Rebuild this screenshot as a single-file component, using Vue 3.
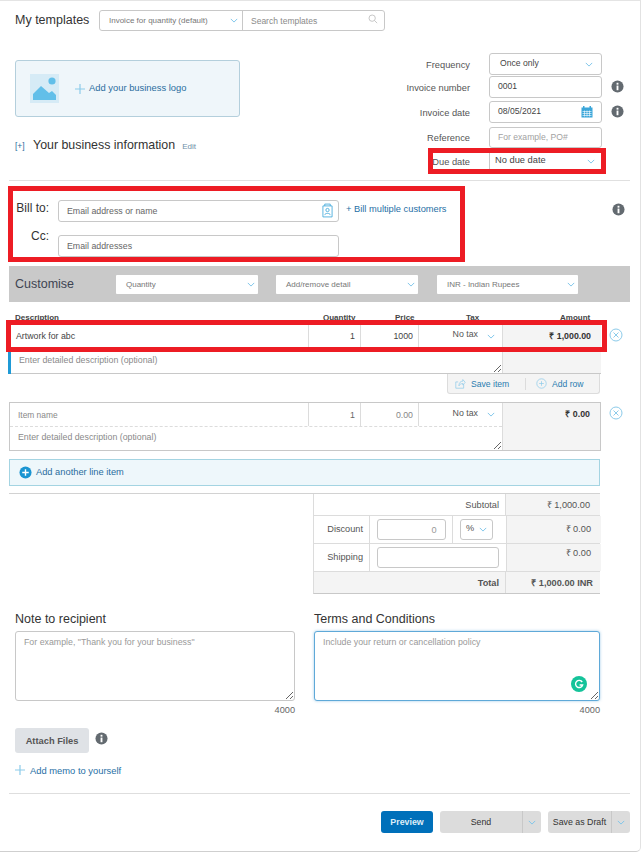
<script setup>
const fields = [
  { label: 'Invoice number', value: '0001' },
]
const customise = ['Quantity', 'Add/remove detail', 'INR - Indian Rupees']
</script>

<template>
  <div class="page">
    <div class="templates">
      <span class="tpl-title">My templates</span>
      <div class="tpl-group">
        <div class="tpl-select">
          <span>Invoice for quantity (default)</span>
          <svg class="chev" viewBox="0 0 10 6"><path d="M1 1l4 4 4-4" /></svg>
        </div>
        <div class="tpl-search">
          <span>Search templates</span>
          <svg class="search" viewBox="0 0 12 12"><circle cx="5" cy="5" r="3.8" /><path d="M8 8l3 3" /></svg>
        </div>
      </div>
    </div>

    <div class="top">
      <div class="top-left">
        <div class="logo-box">
          <svg class="logo-img" viewBox="0 0 29 29">
            <rect width="29" height="29" fill="#d6ebf6" />
            <circle cx="22" cy="7" r="3.6" fill="#62bfe9" />
            <path d="M3 26v-6l8-8 8 7 3-2 4 4v5z" fill="#62bfe9" />
          </svg>
          <svg class="plus" viewBox="0 0 10 10"><path d="M5 0v10M0 5h10" /></svg>
          <span class="logo-text">Add your business logo</span>
        </div>
        <div class="biz">
          <span class="biz-toggle">[+]</span>
          <span class="biz-title">Your business information</span>
          <span class="biz-edit">Edit</span>
        </div>
      </div>

      <div class="top-right">
        <div class="meta-row r-freq">
          <label>Frequency</label>
          <div class="field select-field"><span class="up">Once only</span>
            <svg class="chev" viewBox="0 0 10 6"><path d="M1 1l4 4 4-4" /></svg></div>
        </div>
        <div v-for="f in fields" :key="f.label" class="meta-row r-num">
          <label>{{ f.label }}</label>
          <div class="field"><span class="up">{{ f.value }}</span></div>
          <svg class="info meta-info" viewBox="0 0 14 14"><circle cx="7" cy="7" r="6.5" /><rect x="6" y="6" width="2" height="5" /><rect x="6" y="3" width="2" height="2" /></svg>
        </div>
        <div class="meta-row r-date">
          <label>Invoice date</label>
          <div class="field"><span class="up">08/05/2021</span>
            <svg class="cal" viewBox="0 0 12 12">
              <rect x="0.5" y="1.5" width="11" height="10" fill="#3ba6d9" />
              <rect x="2" y="0" width="1.5" height="3" fill="#3ba6d9" /><rect x="8.5" y="0" width="1.5" height="3" fill="#3ba6d9" />
              <path d="M1.5 5.5h9M1.5 7.5h9M1.5 9.5h9M3.5 4.5v6M6 4.5v6M8.5 4.5v6" stroke="#fff" stroke-width="0.6" />
            </svg></div>
          <svg class="info meta-info" viewBox="0 0 14 14"><circle cx="7" cy="7" r="6.5" /><rect x="6" y="6" width="2" height="5" /><rect x="6" y="3" width="2" height="2" /></svg>
        </div>
        <div class="meta-row r-ref">
          <label>Reference</label>
          <div class="field"><span class="ph">For example, PO#</span></div>
        </div>
        <div class="meta-row r-due">
          <label>Due date</label>
          <div class="field select-field due"><span class="up">No due date</span>
            <svg class="chev" viewBox="0 0 10 6"><path d="M1 1l4 4 4-4" /></svg></div>
        </div>
      </div>
    </div>

    <div class="bill">
      <div class="bill-labels">
        <span>Bill to:</span>
        <span>Cc:</span>
      </div>
      <div class="bill-inputs">
        <div class="field bill-input"><span class="grey">Email address or name</span>
          <svg class="contact" viewBox="0 0 12 16">
            <path d="M1 3h10v12H1z M3 3V1h6v2" fill="none" stroke="#3ba6d9" stroke-width="0.9" />
            <circle cx="6" cy="7.5" r="1.8" fill="none" stroke="#3ba6d9" stroke-width="0.9" />
            <path d="M3 13c0-2.5 6-2.5 6 0" fill="none" stroke="#3ba6d9" stroke-width="0.9" />
          </svg></div>
        <div class="field bill-input"><span class="grey">Email addresses</span></div>
      </div>
      <span class="bill-link">+ Bill multiple customers</span>
      <svg class="info bill-info" viewBox="0 0 14 14"><circle cx="7" cy="7" r="6.5" /><rect x="6" y="6" width="2" height="5" /><rect x="6" y="3" width="2" height="2" /></svg>
    </div>

    <div class="band">
      <span class="band-title">Customise</span>
      <div class="band-selects">
        <div v-for="c in customise" :key="c" class="band-select">
          <span>{{ c }}</span>
          <svg class="chev" viewBox="0 0 10 6"><path d="M1 1l4 4 4-4" /></svg>
        </div>
      </div>
    </div>

    <div class="thead">
      <span class="th-desc">Description</span>
      <span class="th-qty">Quantity</span>
      <span class="th-price">Price</span>
      <span class="th-tax">Tax</span>
      <span class="th-amt">Amount</span>
    </div>

    <div class="line-row first">
      <div class="line line-active">
        <div class="c c-name dark">Artwork for abc</div>
        <div class="c c-num dark">1</div>
        <div class="c c-num dark">1000</div>
        <div class="c c-tax"><span>No tax</span><svg class="chev" viewBox="0 0 10 6"><path d="M1 1l4 4 4-4" /></svg></div>
        <div class="c-amount strong">₹ 1,000.00</div>
        <textarea class="c-desc" placeholder="Enter detailed description (optional)"></textarea>
      </div>
      <svg class="remove" viewBox="0 0 14 14"><circle cx="7" cy="7" r="6" /><path d="M4.5 4.5l5 5M9.5 4.5l-5 5" /></svg>
    </div>

    <div class="item-actions">
      <span class="action act-save">
        <svg viewBox="0 0 14 14"><path d="M1 5h3M1 5v8h10V8" /><path d="M5 10c0-4 2-6 5-6V2l3 3.5L10 9V7c-2 0-4 1-5 3z" /></svg>
        Save item
      </span>
      <span class="action act-add">
        <svg viewBox="0 0 14 14"><circle cx="7" cy="7" r="6" /><path d="M7 4v6M4 7h6" /></svg>
        Add row
      </span>
    </div>

    <div class="line-row second">
      <div class="line line-empty">
        <div class="c c-name ph-sm">Item name</div>
        <div class="c c-num grey-num">1</div>
        <div class="c c-num light-num">0.00</div>
        <div class="c c-tax"><span>No tax</span><svg class="chev" viewBox="0 0 10 6"><path d="M1 1l4 4 4-4" /></svg></div>
        <div class="c-amount strong">₹ 0.00</div>
        <textarea class="c-desc" placeholder="Enter detailed description (optional)"></textarea>
      </div>
      <svg class="remove" viewBox="0 0 14 14"><circle cx="7" cy="7" r="6" /><path d="M4.5 4.5l5 5M9.5 4.5l-5 5" /></svg>
    </div>

    <div class="add-line">
      <svg viewBox="0 0 14 14"><circle cx="7" cy="7" r="6.5" fill="#1b95d2" /><path d="M7 3.5v7M3.5 7h7" stroke="#fff" stroke-width="1.5" /></svg>
      <span>Add another line item</span>
    </div>

    <div class="totals-wrap">
      <div class="totals">
        <div class="t-row t-sub">
          <div class="t-wide">Subtotal</div>
          <div class="t-val">₹ 1,000.00</div>
        </div>
        <div class="t-row t-disc">
          <div class="t-label">Discount</div>
          <div class="t-input"><div class="field small-in"><span>0</span></div></div>
          <div class="t-unit"><div class="field unit-in"><span>%</span><svg class="chev" viewBox="0 0 10 6"><path d="M1 1l4 4 4-4" /></svg></div></div>
          <div class="t-val">₹ 0.00</div>
        </div>
        <div class="t-row t-ship">
          <div class="t-label">Shipping</div>
          <div class="t-ship-in"><div class="field ship-in"></div></div>
          <div class="t-val up-val">₹ 0.00</div>
        </div>
        <div class="t-row t-total">
          <div class="t-wide bold">Total</div>
          <div class="t-val bold">₹ 1,000.00 INR</div>
        </div>
      </div>
    </div>

    <div class="notes">
      <div class="note note-left">
        <h3>Note to recipient</h3>
        <textarea placeholder="For example, &quot;Thank you for your business&quot;"></textarea>
        <div class="count">4000</div>
      </div>
      <div class="note note-right">
        <h3>Terms and Conditions</h3>
        <div class="terms-box">
          <textarea class="focus" placeholder="Include your return or cancellation policy"></textarea>
          <svg class="grammarly" viewBox="0 0 16 16"><circle cx="8" cy="8" r="8" fill="#15c39a" /><path d="M11.2 6A3.6 3.6 0 1 0 11.6 9H8.6" fill="none" stroke="#fff" stroke-width="1.4" /></svg>
        </div>
        <div class="count">4000</div>
      </div>
    </div>

    <div class="attach-row">
      <span class="attach">Attach Files</span>
      <svg class="info" viewBox="0 0 14 14"><circle cx="7" cy="7" r="6.5" /><rect x="6" y="6" width="2" height="5" /><rect x="6" y="3" width="2" height="2" /></svg>
    </div>

    <div class="memo">
      <svg class="plus" viewBox="0 0 10 10"><path d="M5 0v10M0 5h10" /></svg>
      <span>Add memo to yourself</span>
    </div>

    <div class="footer">
      <span class="btn preview">Preview</span>
      <div class="btn split send"><span class="main">Send</span><span class="caret"><svg class="chev" viewBox="0 0 10 6"><path d="M1 1l4 4 4-4" /></svg></span></div>
      <div class="btn split draft"><span class="main">Save as Draft</span><span class="caret"><svg class="chev" viewBox="0 0 10 6"><path d="M1 1l4 4 4-4" /></svg></span></div>
    </div>

    <div class="mark m-due"></div>
    <div class="mark m-bill"></div>
    <div class="mark m-line"></div>
  </div>
</template>

<style>
html, body { margin: 0; background: #fff; }
</style>

<style scoped>
* { box-sizing: border-box; }
.page {
  position: relative;
  width: 641px;
  height: 852px;
  background: #fff;
  border-top: 1px solid #e4e4e4;
  border-right: 1px solid #e2e2e2;
  border-bottom: 1px solid #cfcfcf;
  border-bottom-right-radius: 5px;
  font-family: "Liberation Sans", Arial, sans-serif;
  color: #333;
  overflow: hidden;
  padding-top: 9px;
}
.chev { width: 8px; height: 5px; flex: none; fill: none; stroke: #7cc4ea; stroke-width: 1.2; }
.info { width: 13px; height: 13px; flex: none; fill: #636a70; }
.info rect { fill: #fff; }
.plus { width: 10px; height: 10px; flex: none; fill: none; stroke: #8ccbea; stroke-width: 1.2; }
.field {
  display: flex;
  align-items: center;
  justify-content: space-between;
  background: #fff;
  border: 1px solid #c8c8c8;
  border-radius: 3px;
}

/* templates */
.templates { display: flex; align-items: center; height: 21px; padding-left: 15px; }
.tpl-title { width: 84px; margin-top: -2px; font-size: 12.5px; color: #333; }
.tpl-group { display: flex; width: 286px; height: 21px; border: 1px solid #c8c8c8; border-radius: 3px; }
.tpl-select { width: 143px; display: flex; align-items: center; justify-content: space-between; padding: 0 4px 0 9px; border-right: 1px solid #c8c8c8; font-size: 8px; color: #777; }
.tpl-search { flex: 1; display: flex; align-items: center; justify-content: space-between; padding: 0 6px 0 8px; font-size: 8.5px; color: #8a8a8a; }
.search { width: 10px; height: 10px; fill: none; stroke: #b5b5b5; stroke-width: 0.9; margin-top: -3px; }

/* top */
.top { display: flex; height: 127px; margin-top: 22px; padding-left: 15px; }
.top-left { width: 355px; padding-top: 7px; }
.logo-box {
  display: flex;
  align-items: center;
  width: 225px;
  height: 57px;
  padding-left: 14px;
  background: #eff6fa;
  border: 1px solid #b4cfdc;
  border-radius: 3px;
}
.logo-img { width: 29px; height: 29px; margin-right: 16px; }
.logo-text { margin: -2px 0 0 4px; font-size: 9.4px; color: #2a6d9e; }
.biz { display: flex; align-items: baseline; margin-top: 21px; }
.biz-toggle { width: 18px; font-size: 8.5px; color: #2a6d9e; }
.biz-title { font-size: 12.4px; color: #333; }
.biz-edit { margin-left: 7px; font-size: 8px; color: #6d8fa8; }
.top-right { flex: 1; }
.meta-row { display: flex; align-items: center; position: relative; }
.meta-row label { width: 100px; margin: 1px 19px 0 0; text-align: right; font-size: 9.3px; color: #555; }
.meta-row .field { width: 113px; padding: 0 8px; font-size: 8.6px; color: #444; }
.up { margin-top: -3px; }
.meta-info { position: absolute; left: 241px; top: 4px; }
.r-freq { height: 22px; }
.r-freq .up { margin-left: 2px; }
.r-freq .field { height: 22px; }
.r-num { height: 22px; margin-top: 1px; }
.r-num .field { height: 22px; }
.r-date { height: 22px; margin-top: 3px; }
.r-date .field { height: 22px; }
.r-ref { height: 22px; margin-top: 3px; }
.r-ref .field { height: 21px; }
.r-due { height: 22px; margin-top: 2px; }
.meta-row .due { height: 22px; padding: 0 6px 0 5px; font-size: 9.3px; }
.ph { color: #a2a2a2; }
.cal { width: 12px; height: 12px; }

/* bill */
.bill {
  position: relative;
  display: flex;
  height: 86px;
  margin: 0 10px 0 9px;
  padding-top: 19px;
  border-top: 1px solid #e0e0e0;
}
.bill-labels { display: flex; flex-direction: column; align-items: flex-end; width: 40px; font-size: 12px; color: #333; padding-top: 1px; white-space: nowrap; }
.bill-labels span:last-child { margin-top: 14px; }
.bill-inputs { margin-left: 9px; width: 281px; }
.bill-input { height: 22px; padding: 0 5px 0 8px; font-size: 8.8px; }
.bill-input + .bill-input { margin-top: 13px; }
.grey { color: #666; }
.contact { width: 11px; height: 17px; margin-top: -1px; }
.bill-link { margin-left: 7px; margin-top: 4px; font-size: 9.3px; color: #1f6fa5; }
.bill-info { position: absolute; left: 603px; top: 22px; }

/* band */
.band { display: flex; align-items: center; height: 36px; margin: 0 10px 0 9px; padding-left: 6px; background: #c9c9c9; }
.band-title { width: 101px; font-size: 12.5px; color: #3e4452; }
.band-selects { display: flex; gap: 18px; }
.band-select { display: flex; align-items: center; justify-content: space-between; width: 142px; height: 19px; padding: 0 3px 0 10px; background: #fff; border-radius: 1px; font-size: 8px; color: #777; }
.band-select:last-child { width: 141px; margin-left: 1px; }

/* table */
.thead { position: relative; height: 20px; margin-left: 15px; font-size: 8px; font-weight: 700; color: #444; }
.thead span { position: absolute; top: 11px; }
.th-desc { left: 0; }
.th-qty { left: 308px; }
.th-price { left: 380px; }
.th-tax { left: 451px; }
.th-amt { left: 545px; }
.line-row { display: flex; margin-left: 9px; }
.line {
  display: grid;
  width: 592px;
  grid-template-columns: 300px 52px 58px 83px 99px;
  grid-template-rows: 26px 1fr;
  border-right: 1px solid #c8c8c8;
  border-bottom: 1px solid #c8c8c8;
  position: relative;
}
.line-active { height: 52px; border-top: 1px solid #c8c8c8; }
.line-empty { height: 49px; margin-top: 0; border: 1px solid #c8c8c8; grid-template-columns: 299px 52px 58px 83px 98px; grid-template-rows: 23px 1fr; }
.line-active::before { content: ""; position: absolute; left: -1px; top: 26px; bottom: -1px; width: 3px; background: #1f9ad6; }
.c { display: flex; align-items: center; border-right: 1px solid #dcdcdc; font-size: 8.8px; }
.c-name { padding-left: 7px; }
.c-num { justify-content: flex-end; padding-right: 5px; }
.dark { color: #444; }
.ph-sm { color: #888; font-size: 8.4px; padding-left: 8px; }
.grey-num { color: #666; }
.light-num { color: #888; }
.c-tax { justify-content: flex-end; gap: 9px; padding-right: 7px; border-right: none; color: #555; padding-bottom: 4px; }
.c-tax .chev { margin-top: 4px; }
.c-amount { grid-column: 5; grid-row: 1 / span 2; padding: 7px 10px 0 0; text-align: right; font-size: 8.8px; background: #f4f4f4; border-left: 1px solid #dcdcdc; }
.line-empty .c-amount { padding-top: 5px; }
.strong { font-weight: 700; color: #333; }
.c-desc {
  grid-column: 1 / span 4;
  grid-row: 2;
  display: block;
  width: 100%;
  height: 100%;
  padding: 6px 10px;
  border: none;
  outline: none;
  resize: both;
  font: 8.8px "Liberation Sans", Arial, sans-serif;
  background: transparent;
}
.line-empty .c-desc { border-top: 1px dashed #dcdcdc; padding: 5px 8px; }
.c-desc::placeholder { color: #8a8a8a; opacity: 1; }
.remove { width: 14px; height: 14px; margin: 6px 0 0 8px; fill: none; stroke: #8ccbea; stroke-width: 1; }
.item-actions {
  display: flex;
  align-items: center;
  width: 153px;
  height: 20px;
  margin-left: 447px;
  background: #f4f4f4;
  border: 1px solid #dcdcdc;
  border-top: none;
  border-radius: 0 0 3px 3px;
  font-size: 8.6px;
  color: #2a7cb0;
}
.action { display: flex; align-items: center; gap: 5px; height: 12px; }
.action svg { width: 11px; height: 11px; fill: none; stroke: #8ccbea; stroke-width: 0.9; }
.act-save { width: 78px; padding-left: 7px; border-right: 1px solid #dcdcdc; }
.act-add { padding-left: 10px; }
.second { margin-top: 8px; }
.second .remove { margin-top: 4px; }

.add-line {
  display: flex;
  align-items: center;
  gap: 4px;
  width: 591px;
  height: 27px;
  margin: 8px 0 0 9px;
  padding: 0 0 1px 9px;
  background: #eef7fb;
  border: 1px solid #a4d4e2;
  font-size: 9.3px;
  color: #2a6d9e;
}
.add-line svg { width: 13px; height: 13px; }

/* totals */
.totals-wrap { width: 591px; height: 101px; margin: 7px 0 0 9px; border-top: 1px solid #d2d2d2; }
.totals { width: 287px; margin-left: 304px; border-left: 1px solid #dcdcdc; border-bottom: 1px solid #c8c8c8; font-size: 9.2px; color: #555; }
.t-row { display: grid; border-bottom: 1px solid #dcdcdc; }
.t-row:last-child { border-bottom: none; }
.t-val { background: #f4f4f4; border-left: 1px solid #dcdcdc; text-align: right; padding-right: 10px; display: flex; align-items: center; justify-content: flex-end; }
.t-sub, .t-total { grid-template-columns: 1fr 95px; }
.t-sub { height: 22px; }
.t-wide { display: flex; align-items: center; justify-content: flex-end; padding-right: 6px; }
.t-disc { height: 28px; grid-template-columns: 56px 83px 53px 95px; }
.t-disc .t-val { padding-bottom: 2px; }
.t-ship { height: 28px; grid-template-columns: 56px 136px 95px; }
.t-label { display: flex; align-items: center; justify-content: flex-end; padding: 0 6px 1px 0; border-right: 1px solid #dcdcdc; }
.t-input { display: flex; align-items: center; justify-content: center; border-right: 1px solid #dcdcdc; }
.small-in { width: 69px; height: 21px; justify-content: flex-end; padding-right: 8px; color: #999; }
.t-unit { display: flex; align-items: center; padding-left: 7px; }
.unit-in { width: 33px; height: 21px; padding: 0 5px; }
.unit-in span { margin-top: -3px; }
.t-ship-in { display: flex; align-items: center; padding-left: 7px; }
.ship-in { width: 122px; height: 21px; }
.up-val { align-items: flex-start; padding-top: 2px; }
.t-total { height: 21px; background: #f4f4f4; }
.bold { font-weight: 700; }
.t-total .t-val { padding-right: 7px; }

/* notes */
.notes { display: flex; margin-left: 15px; margin-top: 18px; }
.note h3 { margin: 0 0 4px; height: 15px; line-height: 15px; font-size: 12.5px; font-weight: 400; color: #333; }
.note textarea {
  display: block;
  height: 70px;
  padding: 5px 8px;
  border: 1px solid #c8c8c8;
  border-radius: 3px;
  outline: none;
  resize: both;
  font: 8.8px "Liberation Sans", Arial, sans-serif;
}
.note textarea::placeholder { color: #999; opacity: 1; }
.note-left { width: 280px; }
.note-left textarea { width: 280px; }
.note-right { width: 286px; margin-left: 19px; }
.terms-box { position: relative; }
.note textarea.focus { width: 286px; border-color: #5fa9d8; box-shadow: 0 0 3px rgba(95, 169, 216, 0.6); padding-left: 8px; }
.grammarly { position: absolute; left: 257px; top: 45px; width: 16px; height: 16px; }
.count { margin-top: 4px; text-align: right; font-size: 9.2px; color: #666; }

.attach-row { display: flex; align-items: flex-start; gap: 6px; margin: 13px 0 0 15px; }
.attach-row .info { margin-top: 4px; }
.attach { display: flex; align-items: center; justify-content: center; width: 74px; height: 25px; background: #dfe2e6; border-radius: 3px; font-size: 9.3px; font-weight: 700; color: #555; }
.memo { display: flex; align-items: center; gap: 5px; margin: 12px 0 0 15px; height: 10px; font-size: 9.4px; color: #1f6fa5; }

.footer {
  display: flex;
  justify-content: flex-end;
  gap: 7px;
  height: 60px;
  margin: 18px 10px 0 9px;
  padding-top: 17px;
  border-top: 1px solid #dedede;
}
.btn { display: flex; align-items: center; justify-content: center; height: 22px; border-radius: 3px; font-size: 8.8px; font-weight: 700; }
.preview { width: 52px; background: #0070ba; color: #dfeef8; }
.split { background: #dcdcdc; color: #333; font-weight: 400; justify-content: stretch; }
.split .main { flex: 1; text-align: center; }
.caret { display: flex; align-items: center; justify-content: center; width: 19px; height: 22px; border-left: 1px solid #c8c8c8; }
.send { width: 101px; }
.draft { width: 82px; }

/* red annotation rectangles, drawn over the page */
.mark { position: absolute; border: 5px solid #ed1c24; pointer-events: none; }
.m-due { left: 428px; top: 147px; width: 178px; height: 26px; }
.m-bill { left: 8px; top: 185px; width: 457px; height: 76px; }
.m-line { left: 6px; top: 319px; width: 601px; height: 32px; }
</style>
